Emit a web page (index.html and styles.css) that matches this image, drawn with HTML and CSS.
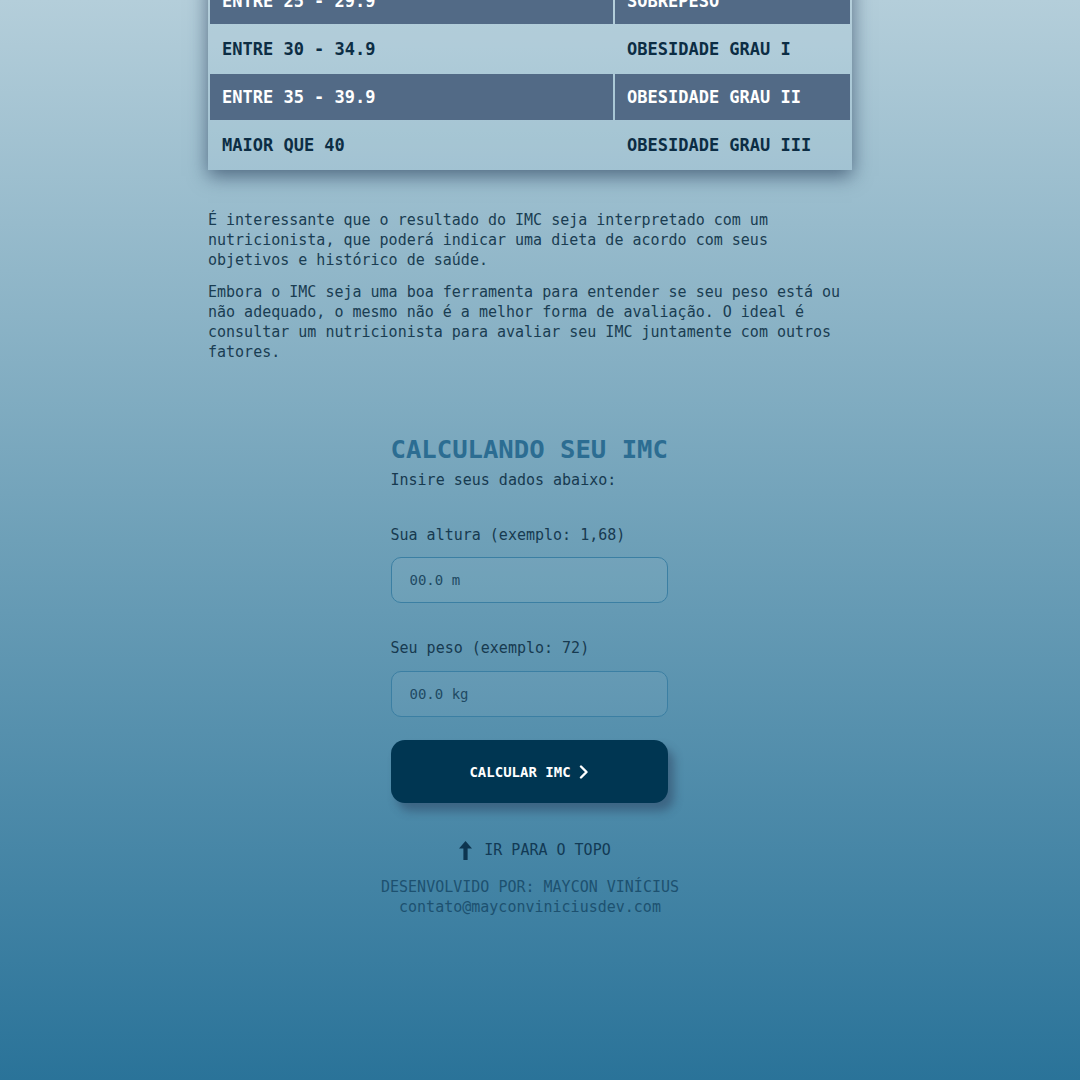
FILE: index.html
```html
<!DOCTYPE html>
<html lang="pt-BR">
<head>
<meta charset="utf-8">
<title>Calculadora IMC</title>
<link rel="stylesheet" href="styles.css">
</head>
<body>
<div class="page">
  <main class="content">
    <table class="imc-table">
      <tbody>
        <tr class="dark"><td>ENTRE 25 - 29.9</td><td>SOBREPESO</td></tr>
        <tr class="light"><td>ENTRE 30 - 34.9</td><td>OBESIDADE GRAU I</td></tr>
        <tr class="dark"><td>ENTRE 35 - 39.9</td><td>OBESIDADE GRAU II</td></tr>
        <tr class="light"><td>MAIOR QUE 40</td><td>OBESIDADE GRAU III</td></tr>
      </tbody>
    </table>
    <p class="text first">É interessante que o resultado do IMC seja interpretado com um nutricionista, que poderá indicar uma dieta de acordo com seus objetivos e histórico de saúde.</p>
    <p class="text">Embora o IMC seja uma boa ferramenta para entender se seu peso está ou não adequado, o mesmo não é a melhor forma de avaliação. O ideal é consultar um nutricionista para avaliar seu IMC juntamente com outros fatores.</p>
  </main>

  <section class="calc">
    <h2 class="calc-title">CALCULANDO SEU IMC</h2>
    <p class="calc-sub">Insire seus dados abaixo:</p>
    <label class="field-label" for="altura">Sua altura (exemplo: 1,68)</label>
    <input class="field" id="altura" type="text" placeholder="00.0 m">
    <label class="field-label" for="peso">Seu peso (exemplo: 72)</label>
    <input class="field" id="peso" type="text" placeholder="00.0 kg">
    <button class="calc-btn" type="button">CALCULAR IMC
      <svg class="chev" width="10" height="14" viewBox="0 0 10 14"><path d="M2 1.5 L7.5 7 L2 12.5" fill="none" stroke="#ffffff" stroke-width="2.4" stroke-linecap="round" stroke-linejoin="round"/></svg>
    </button>
  </section>

  <footer class="footer">
    <a class="top-link" href="#">
      <svg class="up" width="13" height="19" viewBox="0 0 13 19"><path d="M6.5 0 L13 7.5 L8.6 7.5 L8.6 19 L4.4 19 L4.4 7.5 L0 7.5 Z" fill="#0d3550"/></svg>
      <span>IR PARA O TOPO</span>
    </a>
    <p class="credit">DESENVOLVIDO POR: MAYCON VINÍCIUS</p>
    <p class="credit">contato@mayconviniciusdev.com</p>
  </footer>
</div>
</body>
</html>
```

FILE: styles.css
```css
html, body {
  margin: 0;
  padding: 0;
}
body {
  min-height: 1080px;
  background: linear-gradient(to bottom, #b4ceda 0%, #6ea0b8 50%, #2a7399 100%);
  font-family: "DejaVu Sans Mono", "Liberation Mono", monospace;
  color: #173a50;
  overflow: hidden;
}
.page {
  width: 1060px;
  display: flex;
  flex-direction: column;
  align-items: center;
}
.content {
  width: 644px;
  margin-top: -24px;
}
.imc-table {
  width: 644px;
  border-collapse: separate;
  border-spacing: 2px;
  background: rgba(190, 214, 226, 0.15);
  box-shadow: 0 6px 18px rgba(25, 45, 75, 0.6);
  font-size: 17px;
  font-weight: bold;
}
.imc-table td {
  height: 46px;
  padding: 0 0 0 12px;
  box-sizing: border-box;
}
.imc-table td:first-child {
  width: 403px;
}
.imc-table .dark td {
  background: #526a86;
  color: #ffffff;
}
.imc-table .light td {
  color: #0c2d44;
}
.text {
  font-size: 15px;
  line-height: 20px;
  margin: 12px 0 0;
  color: #1a3d52;
}
.text.first {
  margin-top: 40px;
}
.calc {
  width: 277px;
  display: flex;
  flex-direction: column;
  margin-top: 72px;
  margin-left: -2px;
}
.calc-title {
  margin: 0;
  font-size: 25.6px;
  line-height: 30px;
  font-weight: bold;
  color: #2c6d92;
  white-space: nowrap;
}
.calc-sub {
  margin: 6px 0 0;
  font-size: 15px;
  line-height: 20px;
  color: #173a50;
}
.field-label {
  margin-top: 35px;
  font-size: 15px;
  line-height: 20px;
  color: #173a50;
}
.field {
  margin-top: 12px;
  height: 46px;
  box-sizing: border-box;
  border: 1px solid #3b7fa3;
  border-radius: 10px;
  background: rgba(255, 255, 255, 0.05);
  padding: 0 18px;
  font-family: "DejaVu Sans Mono", "Liberation Mono", monospace;
  font-size: 14px;
  color: #173a50;
  outline: none;
}
.field::placeholder {
  color: #1f4a63;
  opacity: 1;
}
#peso {
  margin-top: 13px;
}
.calc-btn {
  margin-top: 23px;
  height: 63px;
  border: none;
  border-radius: 14px;
  background: #003652;
  color: #ffffff;
  font-family: "DejaVu Sans Mono", "Liberation Mono", monospace;
  font-size: 14px;
  font-weight: bold;
  display: flex;
  align-items: center;
  justify-content: center;
  gap: 8px;
  box-shadow: 6px 8px 10px rgba(40, 55, 85, 0.45);
  cursor: pointer;
}
.chev {
  display: block;
}
.footer {
  display: flex;
  flex-direction: column;
  align-items: center;
  margin-top: 37px;
}
.top-link {
  display: flex;
  align-items: center;
  gap: 12px;
  margin-left: 10px;
  text-decoration: none;
  color: #123a55;
  font-size: 15px;
  line-height: 20px;
}
.up {
  display: block;
}
.credit {
  margin: 0;
  font-size: 15px;
  line-height: 20px;
  color: #1d5170;
}
.top-link + .credit {
  margin-top: 17px;
}
```
